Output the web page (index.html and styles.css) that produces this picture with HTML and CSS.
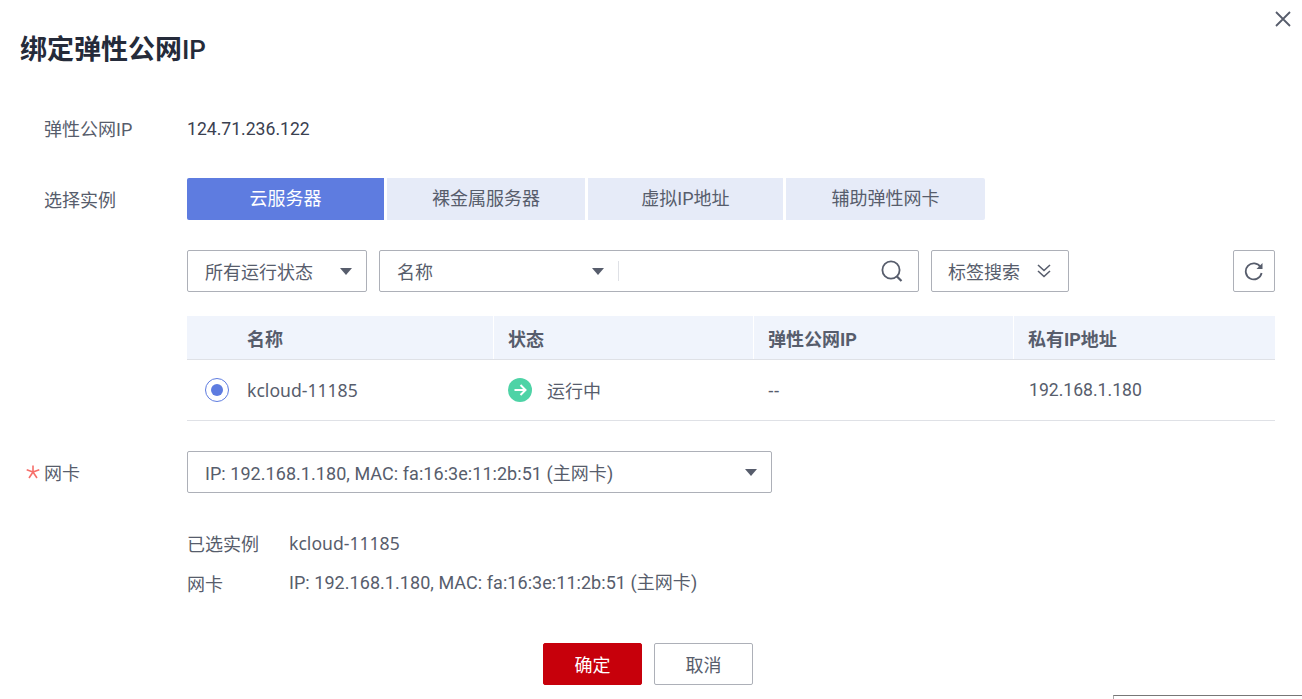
FILE: index.html
```html
<!DOCTYPE html>
<html lang="zh-CN">
<head>
<meta charset="utf-8">
<title>绑定弹性公网IP</title>
<link rel="stylesheet" href="styles.css">
</head>
<body>
<div class="dialog">
  <button class="close" aria-label="关闭">
    <svg width="16" height="16" viewBox="0 0 16 16"><path d="M1 1L15 15M15 1L1 15" fill="none" stroke="#575d6c" stroke-width="1.8"/></svg>
  </button>
  <h1 class="title">绑定弹性公网<span class="title-latin">IP</span></h1>

  <div class="row row-ip">
    <div class="label">弹性公网IP</div>
    <div class="value latin">124.71.236.122</div>
  </div>

  <div class="row row-tabs">
    <div class="label">选择实例</div>
    <div class="tabs">
      <div class="tab tab-active t1">云服务器</div>
      <div class="tab t2">裸金属服务器</div>
      <div class="tab t3">虚拟IP地址</div>
      <div class="tab t4">辅助弹性网卡</div>
    </div>
  </div>

  <div class="toolbar">
    <div class="box sel-status"><span>所有运行状态</span><i class="caret"></i></div>
    <div class="box search">
      <div class="search-key"><span>名称</span><i class="caret"></i></div>
      <div class="search-sep"></div>
      <svg class="search-icon" width="22" height="22" viewBox="0 0 22 22"><circle cx="10" cy="10" r="8.6" fill="none" stroke="#575d6c" stroke-width="1.8"/><path d="M15.5 16L20.5 21" stroke="#575d6c" stroke-width="2.2" fill="none"/></svg>
    </div>
    <div class="box tagsearch"><span>标签搜索</span>
      <svg width="14" height="14" viewBox="0 0 14 14"><path d="M1 1L7 6.5L13 1M1 7L7 12.5L13 7" fill="none" stroke="#575d6c" stroke-width="1.6"/></svg>
    </div>
    <div class="box refresh">
      <svg width="20" height="20" viewBox="0 0 20 20"><path d="M16.6 6.2A8 8 0 1 0 17.6 12" fill="none" stroke="#575d6c" stroke-width="1.8"/><path d="M18.5 2V8H12.5Z" fill="#575d6c"/></svg>
    </div>
  </div>

  <div class="table">
    <div class="thead">
      <div class="cell c1">名称</div>
      <div class="cell c2">状态</div>
      <div class="cell c3">弹性公网IP</div>
      <div class="cell c4">私有IP地址</div>
    </div>
    <div class="tbody">
      <div class="cell c1"><span class="radio"></span><span class="name">kcloud-11185</span></div>
      <div class="cell c2">
        <svg class="status" width="24" height="24" viewBox="0 0 24 24"><circle cx="12" cy="12" r="12" fill="#4ed3a6"/><path d="M6.5 12H17M12.5 7L17.5 12L12.5 17" fill="none" stroke="#fff" stroke-width="2"/></svg>
        <span>运行中</span>
      </div>
      <div class="cell c3 name">--</div>
      <div class="cell c4 latin">192.168.1.180</div>
    </div>
  </div>

  <div class="row row-nic">
    <div class="label">
      <svg class="star" width="14" height="14" viewBox="0 0 14 14"><path d="M7 0.5V7M7 7L13.3 4.8M7 7L11 13M7 7L3 13M7 7L0.7 4.8" fill="none" stroke="#f66f6a" stroke-width="1.6"/></svg>网卡
    </div>
    <div class="box nic"><span class="mac">IP: 192.168.1.180, MAC: fa:16:3e:11:2b:51 (主网卡)</span><i class="caret"></i></div>
  </div>

  <div class="summary">
    <div class="sum-row"><div class="sum-label">已选实例</div><div class="sum-value name">kcloud-11185</div></div>
    <div class="sum-row"><div class="sum-label">网卡</div><div class="sum-value mac">IP: 192.168.1.180, MAC: fa:16:3e:11:2b:51 (主网卡)</div></div>
  </div>

  <div class="actions">
    <button class="btn btn-primary">确定</button>
    <button class="btn">取消</button>
  </div>
  <div class="corner"></div>
</div>
</body>
</html>
```
FILE: styles.css
```css
* { box-sizing: border-box; }
html, body { margin: 0; padding: 0; background: #fff; overflow: hidden; }
body {
  width: 1302px;
  height: 699px;
  font-family: Roboto, "Noto Sans CJK SC", sans-serif;
  font-size: 18px;
  color: #252b3a;
}
.dialog { position: relative; width: 1302px; height: 699px; padding: 0 27px 0 0; }
.close {
  position: absolute; left: 1275px; top: 11px;
  width: 16px; height: 16px; padding: 0; border: 0; background: none; line-height: 0;
}
.title {
  margin: 0; padding: 32px 0 0 20px;
  font-size: 27px; line-height: 36px; height: 68px; font-weight: 700; color: #252b3a;
}
.title-latin { font-weight: 500; font-size: 26px; }
.latin { font-size: 17.6px; }
.mac { letter-spacing: 0.05px; }
.name { font-family: "Noto Sans", "Noto Sans CJK SC", sans-serif; font-size: 17.6px; }
.row { display: flex; }
.label { width: 187px; padding-left: 44px; color: #575d6c; flex: none; position: relative; }
.row-ip { margin-top: 49px; line-height: 24px; }
.row-ip .label { padding-top: 1px; height: 24px; }
.row-ip .value { color: #3a4050; }
.row-tabs { margin-top: 37px; align-items: center; height: 42px; }
.row-tabs .label { padding-bottom: 1px; }
.tabs { display: flex; gap: 3px; }
.tab {
  height: 42px; line-height: 42px; text-align: center; background: #e6ebf8; color: #575d6c;
}
.t1 { width: 197px; border-radius: 2px 0 0 2px; }
.t2 { width: 198px; }
.t3 { width: 195px; }
.t4 { width: 199px; border-radius: 0 2px 2px 0; }
.tab-active { background: #5e7ce0; color: #fff; }
.toolbar { display: flex; margin: 30px 0 0 187px; gap: 12px; }
.box {
  height: 42px; border: 1px solid #adb0b8; border-radius: 2px; display: flex; align-items: center;
  color: #575d6c; background: #fff;
}
.caret {
  display: block; width: 0; height: 0; flex: none;
  border-left: 6.5px solid transparent; border-right: 6.5px solid transparent; border-top: 7px solid #575d6c;
}
.sel-status { width: 180px; padding: 0 14px 0 17px; justify-content: space-between; }
.search { width: 540px; padding-left: 17px; }
.search-key { width: 207px; display: flex; justify-content: space-between; align-items: center; }
.search-sep { width: 1px; height: 20px; background: #dfe1e6; margin-left: 14px; }
.search-icon { margin-left: auto; margin-right: 15px; }
.tagsearch { width: 138px; padding: 0 17px 0 16px; justify-content: space-between; }
.refresh { width: 42px; margin-left: 152px; justify-content: center; }
.table { margin: 24px 0 0 187px; }
.thead, .tbody { display: flex; }
.thead { height: 44px; background: #f0f4fc; border-bottom: 1px solid #dfe1e6; font-weight: 700; color: #575d6c; }
.tbody { height: 61px; border-bottom: 1px solid #dfe1e6; color: #575d6c; }
.cell { display: flex; align-items: center; padding-left: 15px; }
.thead .cell + .cell { border-left: 1px solid #fff; padding-left: 14px; }
.c1 { width: 306px; padding-left: 60px; position: relative; }
.c2 { width: 260px; }
.c3 { width: 260px; }
.c4 { width: 262px; padding-left: 16px; }
.thead .c4 { padding-left: 15px; }
.radio {
  position: absolute; left: 18px; top: 18px; width: 24px; height: 24px; border-radius: 50%;
  border: 1px solid #5e7ce0; background: #fff;
}
.radio::after {
  content: ""; position: absolute; left: 5px; top: 5px; width: 12px; height: 12px; border-radius: 50%; background: #5e7ce0;
}
.status { margin-right: 15px; flex: none; }
.row-nic { margin-top: 30px; align-items: center; }
.star { position: absolute; left: 26px; top: 14px; }
.row-nic .label { line-height: 42px; height: 42px; padding-top: 2px; }
.nic { width: 585px; padding: 0 14px 0 17px; justify-content: space-between; }
.summary { margin: 37px 0 0 187px; }
.sum-row { display: flex; height: 40px; color: #575d6c; }
.sum-label { width: 102px; }
.sum-value { line-height: 24px; padding-top: 1px; }
.actions { display: flex; gap: 12px; margin: 33px 0 0 543px; }
.btn {
  width: 99px; height: 42px; border: 1px solid #adb0b8; border-radius: 2px; background: #fff;
  font: inherit; color: #575d6c; padding: 0;
}
.btn-primary { background: #c7000b; border-color: #c7000b; color: #fff; }
.corner {
  position: absolute; left: 1113px; top: 695px; width: 189px; height: 4px;
  border-top: 1px solid #777; border-left: 1px solid #aaa;
}
```
